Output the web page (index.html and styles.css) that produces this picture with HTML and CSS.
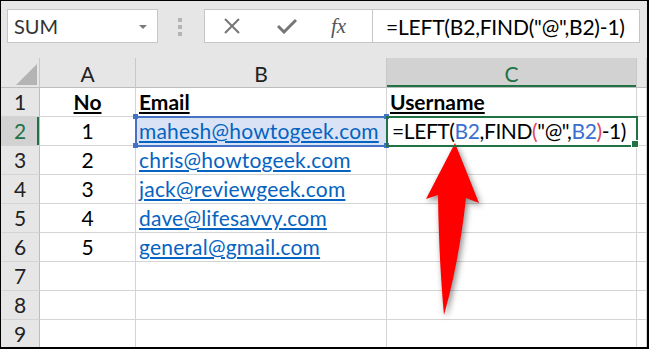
FILE: index.html
```html
<!DOCTYPE html>
<html lang="en">
<head>
    <meta charset="UTF-8">
    <meta name="viewport" content="width=device-width, initial-scale=1.0">
    <title>LEFT and FIND</title>
    <link rel="stylesheet" href="styles.css">
</head>
<body>

<div class="frame">
    <!-- Name box and formula bar -->
    <div class="toolbar">
        <div class="name-box">
            <span>SUM</span>
            <span class="caret"></span>
        </div>
        <div class="grip"><i></i><i></i><i></i></div>
        <div class="formula-bar">
            <div class="fx-tools">
                <svg class="icon-x" width="18" height="16" viewBox="0 0 18 16">
                    <path d="M2 1 L16 15 M16 1 L2 15" stroke="#767676" stroke-width="2" fill="none"/>
                </svg>
                <svg class="icon-check" width="20" height="16" viewBox="0 0 20 16">
                    <path d="M1 8 L7 14 L19 2" stroke="#767676" stroke-width="3" fill="none"/>
                </svg>
                <span class="fx">fx</span>
            </div>
            <div class="formula">=LEFT(B2,FIND("@",B2)-1)</div>
        </div>
    </div>

    <!-- Sheet grid -->
    <div class="sheet">
        <div class="corner"><span class="tri"></span></div>
        <div class="hd">A</div>
        <div class="hd">B</div>
        <div class="hd hd-active">C</div>
        <div class="hd"></div>

        <div class="rh">1</div>
        <div class="c center"><b class="u">No</b></div>
        <div class="c"><b class="u">Email</b></div>
        <div class="c"><b class="u">Username</b></div>
        <div class="c"></div>

        <div class="rh rh-active">2</div>
        <div class="c center">1</div>
        <div class="c sel-ref"><span class="link">mahesh@howtogeek.com</span></div>
        <div class="c sel-edit">=LEFT(<span class="blue">B2</span>,FIND<span class="red">(</span>"@",<span class="blue">B2</span><span class="red">)</span>-1)</div>
        <div class="c"></div>

        <div class="rh">3</div>
        <div class="c center">2</div>
        <div class="c"><span class="link">chris@howtogeek.com</span></div>
        <div class="c"></div>
        <div class="c"></div>

        <div class="rh">4</div>
        <div class="c center">3</div>
        <div class="c"><span class="link">jack@reviewgeek.com</span></div>
        <div class="c"></div>
        <div class="c"></div>

        <div class="rh">5</div>
        <div class="c center">4</div>
        <div class="c"><span class="link">dave@lifesavvy.com</span></div>
        <div class="c"></div>
        <div class="c"></div>

        <div class="rh">6</div>
        <div class="c center">5</div>
        <div class="c"><span class="link">general@gmail.com</span></div>
        <div class="c"></div>
        <div class="c"></div>

        <div class="rh">7</div>
        <div class="c"></div><div class="c"></div><div class="c"></div><div class="c"></div>

        <div class="rh">8</div>
        <div class="c"></div><div class="c"></div><div class="c"></div><div class="c"></div>

        <div class="rh">9</div>
        <div class="c"></div><div class="c"></div><div class="c"></div><div class="c"></div>
    </div>

    <!-- Red pointer arrow -->
    <svg class="arrow" width="646" height="346" viewBox="1 1 646 346">
        <path d="M455 143 L479 203 L466 198 Q459 262 444 315 Q439 262 438 195 L426 199 Z" fill="#ff0000"/>
    </svg>
</div>

</body>
</html>
```

FILE: styles.css
```css
body {
    margin: 0;
    background: #ffffff;
}
.frame {
    position: relative;
    width: 646px;
    height: 346px;
    border-style: solid;
    border-color: #000000;
    border-width: 1px 2px 2px 1px;
    overflow: hidden;
    background: #ffffff;
    font-family: Lato, "Liberation Sans", sans-serif;
    color: #000000;
}

/* toolbar */
.toolbar {
    height: 57px;
    box-sizing: border-box;
    background: #e6e6e6;
    display: flex;
    align-items: flex-start;
    padding: 8px 0 0 6px;
}
.name-box {
    width: 151px;
    height: 34px;
    box-sizing: border-box;
    border: 1px solid #c6c6c6;
    background: #ffffff;
    display: flex;
    align-items: center;
    justify-content: space-between;
    padding: 0 10px 0 6px;
    font-size: 20px;
    color: #333333;
}
.caret {
    width: 0;
    height: 0;
    border-left: 4px solid transparent;
    border-right: 4px solid transparent;
    border-top: 4px solid #7a7a7a;
    margin-top: 2px;
}
.grip {
    display: flex;
    flex-direction: column;
    gap: 3px;
    margin: 9px 0 0 20px;
}
.grip i {
    display: block;
    width: 4px;
    height: 4px;
    background: #b4b4b4;
}
.formula-bar {
    display: flex;
    width: 436px;
    height: 34px;
    box-sizing: border-box;
    margin-left: 22px;
    border: 1px solid #c6c6c6;
    background: #ffffff;
}
.fx-tools {
    width: 167px;
    display: flex;
    align-items: center;
}
.icon-x {
    margin-left: 18px;
}
.icon-check {
    margin-left: 36px;
}
.fx {
    margin-left: 34px;
    font-family: "Liberation Serif", serif;
    font-style: italic;
    font-size: 21px;
    color: #555555;
}
.formula {
    flex: 1;
    border-left: 1px solid #c6c6c6;
    padding-left: 13px;
    display: flex;
    align-items: center;
    font-size: 21px;
    letter-spacing: -0.2px;
    white-space: nowrap;
}

/* sheet */
.sheet {
    display: grid;
    grid-template-columns: 39px 96px 251px 250px 1fr;
    grid-template-rows: 30px;
    grid-auto-rows: 29px;
    font-size: 21px;
}
.sheet > div {
    box-sizing: border-box;
    border-right: 1px solid #d4d4d4;
    border-bottom: 1px solid #d4d4d4;
    line-height: 28px;
    white-space: nowrap;
}
.corner {
    background: #e6e6e6;
    display: flex;
    justify-content: flex-end;
    align-items: flex-end;
    padding: 0 2px 2px 0;
}
.sheet > .corner,
.sheet > .hd {
    border-bottom-color: #bdbdbd;
    border-right-color: #c8c8c8;
}
.tri {
    width: 0;
    height: 0;
    border-left: 21px solid transparent;
    border-bottom: 21px solid #b4b4b4;
}
.hd {
    background: #e6e6e6;
    text-align: center;
    color: #222222;
    padding-top: 2px;
}
.hd-active {
    background: #d2d2d2;
    color: #217346;
    box-shadow: inset 0 -2px 0 #217346;
}
.rh {
    background: #e6e6e6;
    text-align: center;
    color: #222222;
}
.sheet > .rh {
    border-right-color: #bdbdbd;
}
.rh-active {
    background: #d2d2d2;
    color: #217346;
    box-shadow: inset -2px 0 0 #217346;
}
.c {
    padding-left: 3px;
}
.center {
    text-align: center;
    padding-left: 0;
}
.u {
    text-decoration: underline;
}
.link {
    color: #0563c1;
    text-decoration: underline;
    letter-spacing: 0.2px;
}
.blue {
    color: #3a6fd0;
}
.red {
    color: #e2445c;
}

/* selected reference cell B2 */
.sel-ref {
    position: relative;
    background: #d9e3f5;
    outline: 2px solid #4472c4;
    outline-offset: -1px;
}
.sel-ref::before,
.sel-ref::after {
    content: "";
    position: absolute;
    left: -3px;
    width: 5px;
    height: 5px;
    background: #4472c4;
}
.sel-ref::before {
    top: -3px;
}
.sel-ref::after {
    bottom: -3px;
}
.sel-ref .link::before,
.sel-ref .link::after {
    content: "";
    position: absolute;
    right: -3px;
    width: 5px;
    height: 5px;
    background: #4472c4;
}
.sel-ref .link::before {
    top: -3px;
}
.sel-ref .link::after {
    bottom: -3px;
}

/* cell being edited C2 */
.sel-edit {
    position: relative;
    z-index: 1;
    outline: 2px solid #217346;
    outline-offset: -1px;
    padding-left: 5px;
    letter-spacing: -0.4px;
}
.sel-edit::after {
    content: "";
    position: absolute;
    right: -3px;
    bottom: -3px;
    width: 6px;
    height: 6px;
    background: #217346;
    border: 1px solid #ffffff;
}

.arrow {
    position: absolute;
    left: 0;
    top: 0;
    filter: drop-shadow(2px 3px 3px rgba(0, 0, 0, 0.45));
}
```
